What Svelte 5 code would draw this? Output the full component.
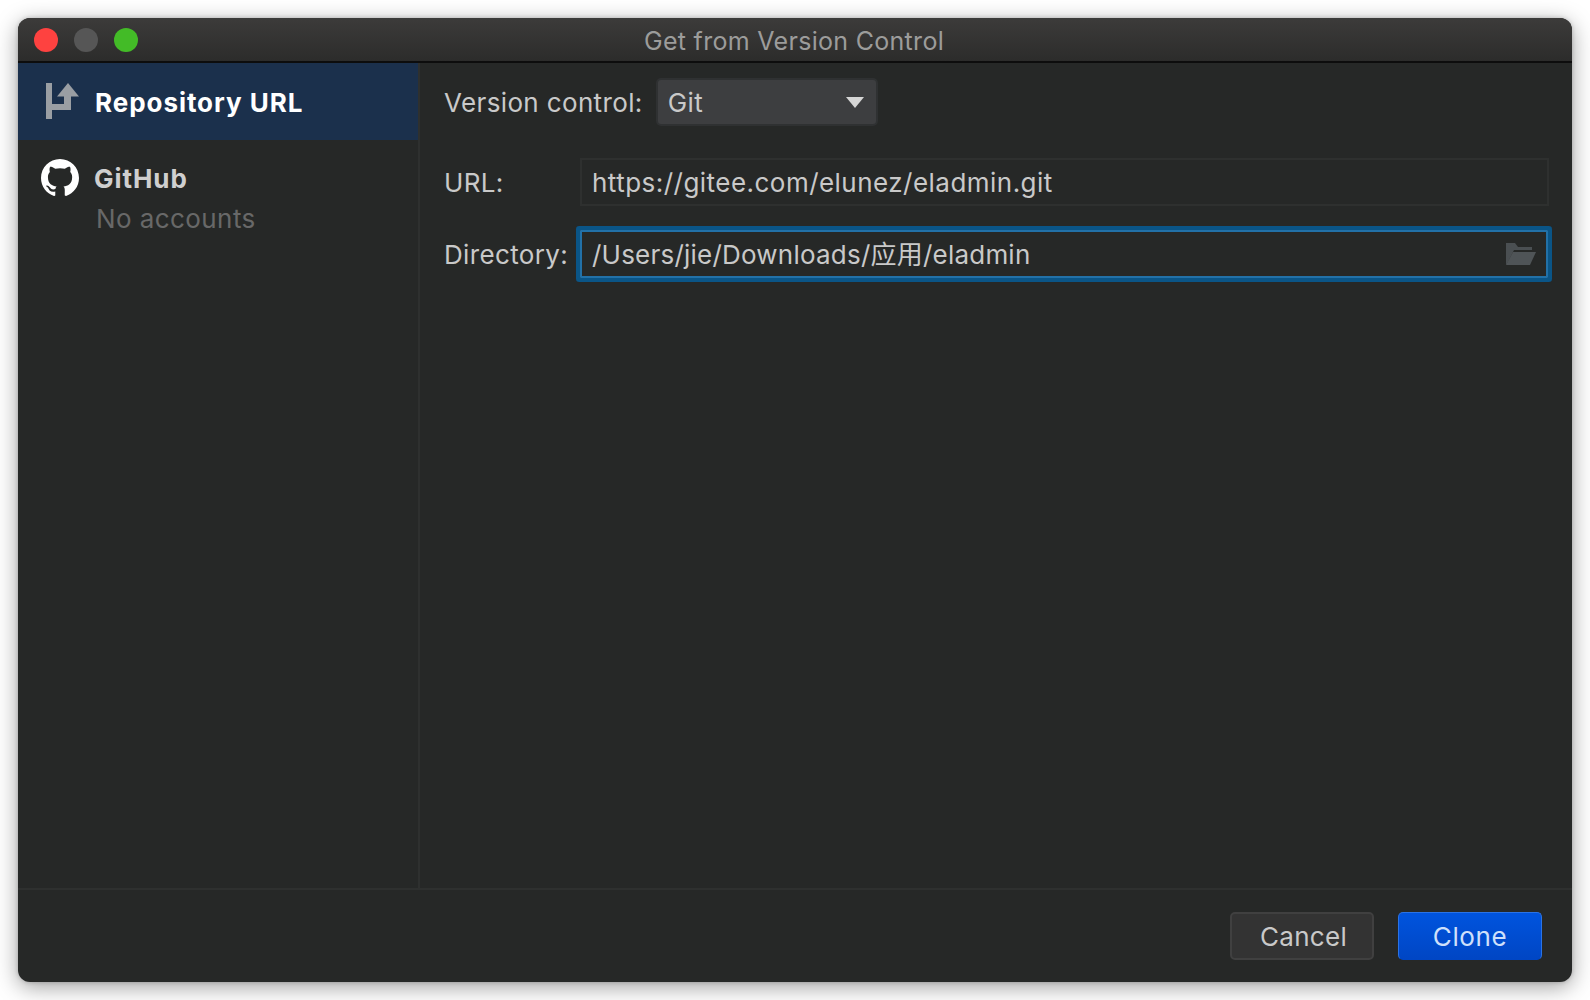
<script>
  const path = '/Users/jie/Downloads/应用/eladmin';
</script>

<div class="page">
  <section class="window">
    <header class="titlebar">
      <div class="lights">
        <span class="light red"></span>
        <span class="light grey"></span>
        <span class="light green"></span>
      </div>
      <div class="title">Get from Version Control</div>
    </header>

    <div class="main">
      <aside class="sidebar">
        <div class="item selected">
          <svg class="vcs" viewBox="0 0 34 36" aria-hidden="true">
            <path d="M0 0h6v36H0zM6 21h19v6H6zM18 10h7v17h-7z" fill="#9a9ea3" />
            <path d="M22 0l11 13.500H11z" fill="#9a9ea3" />
          </svg>
          <span class="name strong">Repository URL</span>
        </div>
        <div class="item account">
          <svg class="gh" viewBox="0 0 16 16" aria-hidden="true">
            <path fill="#fff" d="M8 0C3.580 0 0 3.580 0 8c0 3.540 2.290 6.530 5.470 7.590.4.070.55-.17.55-.38 0-.19-.01-.82-.01-1.490-2.010.37-2.530-.49-2.690-.94-.09-.23-.48-.94-.82-1.130-.28-.15-.68-.52-.01-.53.630-.01 1.080.58 1.230.82.720 1.210 1.870.87 2.330.66.070-.52.280-.87.510-1.070-1.780-.2-3.640-.89-3.640-3.950 0-.87.310-1.590.82-2.150-.08-.2-.36-1.020.08-2.120 0 0 .67-.21 2.200.82.640-.18 1.320-.27 2-.27s1.360.09 2 .27c1.530-1.040 2.200-.82 2.200-.82.44 1.100.16 1.920.08 2.120.51.56.82 1.270.82 2.150 0 3.070-1.870 3.750-3.650 3.950.29.25.54.73.54 1.480 0 1.070-.01 1.930-.01 2.200 0 .21.150.46.550.38A8.010 8.010 0 0 0 16 8c0-4.420-3.580-8-8-8z" />
          </svg>
          <div class="lines">
            <span class="name">GitHub</span>
            <span class="sub">No accounts</span>
          </div>
        </div>
      </aside>

      <div class="content">
        <div class="row first">
          <span class="label">Version control:</span>
          <div class="select">
            <span>Git</span>
            <svg class="caret" viewBox="0 0 18 11" aria-hidden="true"><path d="M0 0h18l-9 11z" fill="#d6d6d6" /></svg>
          </div>
        </div>
        <div class="row second">
          <span class="label fixed">URL:</span>
          <div class="field url">https://gitee.com/elunez/eladmin.git</div>
        </div>
        <div class="row third">
          <span class="label fixed">Directory:</span>
          <div class="field focused">
            <span>{path}</span>
            <svg class="folder" viewBox="0 0 30 23" aria-hidden="true">
              <path d="M0 0h9l3 4h14v3H8L2 19l-2 3z" fill="#4a4f52" />
              <path d="M7 9h23l-6 13H0z" fill="#4f5457" />
            </svg>
          </div>
        </div>
      </div>
    </div>

    <footer class="footer">
      <button class="btn cancel">Cancel</button>
      <button class="btn clone">Clone</button>
    </footer>
  </section>
</div>

<style>
  :global(body) {
    margin: 0;
    background: #fff;
  }
  .page {
    width: 1590px;
    height: 1000px;
    padding: 18px;
    box-sizing: border-box;
    font-family: Inter, "Noto Sans CJK SC", "Noto Sans", sans-serif;
    font-size: 26px;
    line-height: 32px;
    letter-spacing: 0.25px;
    color: #c9c9c9;
    overflow: hidden;
  }
  .window {
    width: 1554px;
    height: 964px;
    display: flex;
    flex-direction: column;
    background: #262827;
    border-radius: 12px;
    box-shadow: 0 5px 22px rgba(0, 0, 0, 0.38), 0 0 4px rgba(0, 0, 0, 0.2);
    overflow: hidden;
  }
  .titlebar {
    position: relative;
    height: 43px;
    flex: none;
    display: flex;
    align-items: center;
    justify-content: center;
    background: linear-gradient(#3c3b3a, #2c2c2b);
    border-bottom: 2px solid #0d0d0d;
  }
  .lights {
    position: absolute;
    left: 16px;
    top: 10px;
    display: flex;
    gap: 16px;
  }
  .light {
    width: 24px;
    height: 24px;
    border-radius: 50%;
  }
  .red { background: #fe4240; }
  .grey { background: #565656; }
  .green { background: #43bb27; }
  .title {
    color: #9c9c9b;
    font-size: 25px;
    letter-spacing: 0.3px;
    padding-top: 2px;
    margin-left: -2px;
  }
  .main {
    flex: 1;
    display: flex;
    min-height: 0;
    border-bottom: 2px solid #2e302f;
  }
  .sidebar {
    width: 400px;
    flex: none;
    border-right: 2px solid #2e302f;
  }
  .item {
    display: flex;
    padding-left: 28px;
    align-items: center;
  }
  .selected {
    height: 77px;
    background: #1b304c;
  }
  .vcs {
    width: 34px;
    height: 36px;
    margin-right: 15px;
    margin-top: -2px;
  }
  .name {
    font-weight: 700;
    font-size: 26px;
    letter-spacing: 0.95px;
    color: #cfcfcf;
  }
  .strong {
    color: #fff;
    padding-top: 3px;
  }
  .account {
    padding: 17px 0 0 23px;
    align-items: flex-start;
  }
  .gh {
    width: 38px;
    height: 38px;
    margin-top: 2px;
    margin-right: 15px;
  }
  .lines {
    display: flex;
    flex-direction: column;
  }
  .lines .name {
    line-height: 40px;
    margin-top: 2px;
  }
  .sub {
    color: #686868;
    margin-left: 2px;
    line-height: 40px;
    letter-spacing: 0.42px;
  }
  .content {
    flex: 1;
    padding: 15px 23px 0 24px;
    min-width: 0;
  }
  .row {
    display: flex;
    align-items: center;
  }
  .second { margin-top: 32px; }
  .third { margin-top: 24px; }
  .label {
    white-space: nowrap;
    letter-spacing: 0.36px;
    padding-top: 2px;
  }
  .fixed { width: 136px; flex: none; }
  .select {
    margin-left: 13px;
    width: 222px;
    height: 48px;
    box-sizing: border-box;
    display: flex;
    align-items: center;
    justify-content: space-between;
    padding: 2px 12px 0 10px;
    background: #3d3e40;
    border: 2px solid #2f3132;
    border-radius: 5px;
    letter-spacing: 0.5px;
  }
  .caret {
    width: 18px;
    height: 11px;
    margin-top: -2px;
  }
  .field {
    flex: 1;
    height: 48px;
    box-sizing: border-box;
    display: flex;
    align-items: center;
    justify-content: space-between;
    padding: 2px 11px 0 10px;
    border: 2px solid #2e302f;
    white-space: nowrap;
  }
  .url {
    letter-spacing: 0.47px;
  }
  .focused {
    margin-right: 1px;
    border: 2px solid #2271a8;
    box-shadow: 0 0 0 4px #0a5587;
    border-radius: 1px;
    letter-spacing: 0.22px;
  }
  .folder {
    width: 30px;
    height: 23px;
    margin-top: -1px;
    margin-right: -1px;
  }
  .footer {
    flex: none;
    height: 92px;
    box-sizing: border-box;
    display: flex;
    justify-content: flex-end;
    gap: 24px;
    padding: 22px 30px 0 0;
  }
  .btn {
    width: 144px;
    height: 48px;
    box-sizing: border-box;
    font: inherit;
    border-radius: 5px;
    padding: 2px 0 0;
  }
  .cancel {
    background: #333333;
    border: 2px solid #404040;
    color: #c9c9c9;
    letter-spacing: 0.3px;
    padding-left: 3px;
  }
  .clone {
    background: linear-gradient(#0054de, #0046c4);
    border: 1px solid #2a73e6;
    border-bottom-color: #0046c4;
    color: #cfe0fb;
    letter-spacing: 0.6px;
  }
</style>
